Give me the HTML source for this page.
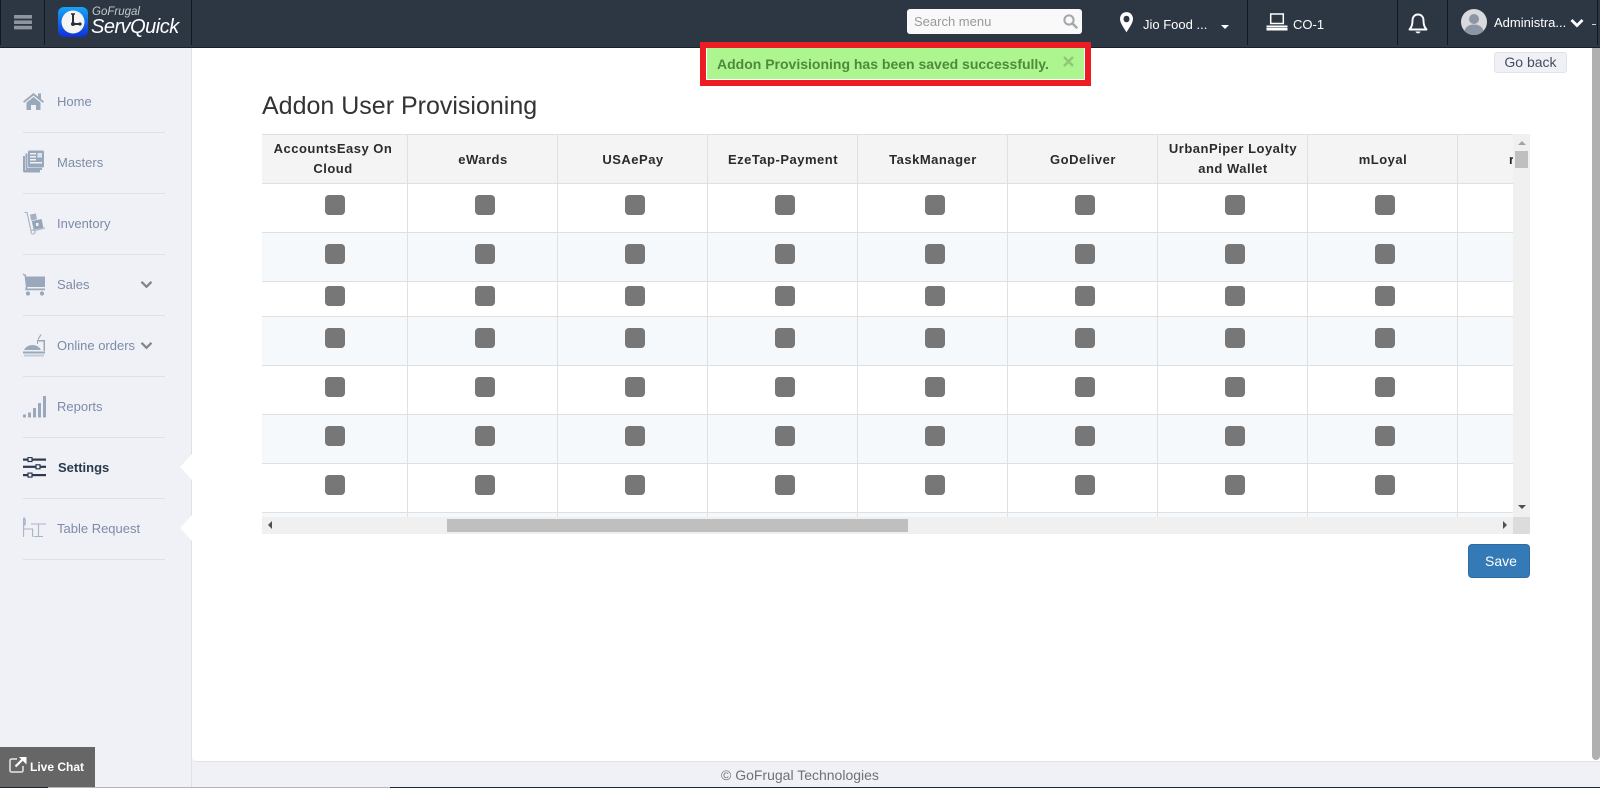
<!DOCTYPE html>
<html><head><meta charset="utf-8"><title>Addon User Provisioning</title>
<style>
html,body{margin:0;padding:0;width:1600px;height:788px;overflow:hidden;background:#eff1f6;font-family:"Liberation Sans",Arial,sans-serif;}
.a{position:absolute;}
#hd{left:0;top:0;width:1600px;height:47px;background:#2d3743;border-bottom:1px solid #1a2027;}
.dv{position:absolute;top:0;width:1px;height:45px;background:#14191f;}
.t{position:absolute;white-space:nowrap;}
.nav{position:absolute;left:57px;font-size:13px;color:#7d8ba8;white-space:nowrap;line-height:16px;}
.sep{position:absolute;left:23px;width:142px;height:1px;background:#dde0e8;}
#wrap{left:262px;top:134px;width:1251px;height:383px;overflow:hidden;}
.hc{position:absolute;top:0;height:49px;width:150px;display:flex;align-items:center;justify-content:center;text-align:center;font-size:13px;font-weight:bold;color:#2b2b2b;letter-spacing:.5px;line-height:20px;}
.cb{position:absolute;width:20px;height:20px;border-radius:4px;background:#777;}
.hl{position:absolute;left:0;width:1251px;height:1px;background:#e0e0e0;}
.vl{position:absolute;top:0;width:1px;height:383px;background:#e0e0e0;}
.st{position:absolute;left:0;width:1251px;background:#f6f9fc;}
</style></head><body>
<div class="a" id="hd"></div>
<div class="dv" style="left:0"></div><div class="dv" style="left:44px"></div><div class="dv" style="left:191px"></div>
<div class="dv" style="left:1247px"></div><div class="dv" style="left:1397px"></div><div class="dv" style="left:1447px"></div><div class="dv" style="left:1597px"></div>
<svg class="a" style="left:14px;top:14px" width="18" height="16"><g fill="#8d959e"><rect width="18" height="3.6" y="1" rx=".6"/><rect width="18" height="3.6" y="6.4" rx=".6"/><rect width="18" height="3.6" y="11.8" rx=".6"/></g></svg>
<svg class="a" style="left:58px;top:7px" width="30" height="30" viewBox="0 0 30 30"><defs><linearGradient id="lg" x1="0" y1="0" x2="0" y2="1"><stop offset="0" stop-color="#14a6f5"/><stop offset="1" stop-color="#1030d8"/></linearGradient></defs><rect width="30" height="30" rx="6" fill="url(#lg)"/><circle cx="15" cy="15" r="11.5" fill="#f4f4f4"/><path d="M15 7v10h7" stroke="#2a2f36" stroke-width="2" fill="none"/><circle cx="15" cy="17" r="2" fill="#2a2f36"/><circle cx="22" cy="17" r="1.6" fill="#2a2f36"/><path d="M13 7h4" stroke="#2a2f36" stroke-width="1.5"/></svg>
<div class="t" style="left:92px;top:5px;font-size:11.5px;font-style:italic;color:#c4c8cd;line-height:14px">GoFrugal</div>
<div class="t" style="left:91px;top:15px;font-size:20px;font-style:italic;color:#fff;line-height:25px;letter-spacing:-.5px">ServQuick</div>

<div class="a" style="left:907px;top:9px;width:175px;height:25px;background:#f9f9f9;border-radius:3px"></div>
<div class="t" style="left:914px;top:14px;font-size:13px;color:#999;line-height:15px">Search menu</div>
<svg class="a" style="left:1063px;top:14px" width="15" height="15" viewBox="0 0 15 15"><circle cx="6" cy="6" r="4.6" fill="none" stroke="#a3a7ad" stroke-width="2"/><path d="M9.5 9.5L13.5 13.5" stroke="#a3a7ad" stroke-width="2.4" stroke-linecap="round"/></svg>
<svg class="a" style="left:1119px;top:11px" width="15" height="23" viewBox="0 0 15 21" preserveAspectRatio="none"><path d="M7.5 1C3.6 1 1 3.8 1 7.3c0 4 4.5 8.8 6.5 12.2C9.500 16.100 14 11.300 14 7.300 14 3.800 11.400 1 7.500 1z" fill="#fff"/><circle cx="7.500" cy="7.300" r="3" fill="#2d3743"/></svg>
<div class="t" style="left:1143px;top:17px;font-size:13px;color:#fff;line-height:15px">Jio Food ...</div>
<div class="a" style="left:1221px;top:25px;width:0;height:0;border-left:4.5px solid transparent;border-right:4.5px solid transparent;border-top:4.5px solid #fff"></div>
<svg class="a" style="left:1266px;top:13px" width="22" height="19" viewBox="0 0 22 19"><rect x="4.700" y="1" width="12.600" height="9.500" fill="none" stroke="#fff" stroke-width="1.500"/><rect x="0.500" y="12.500" width="21" height="2" fill="#fff"/><rect x="0.500" y="15" width="21" height="2.500" fill="#fff"/></svg>
<div class="t" style="left:1293px;top:17px;font-size:13px;color:#fff;line-height:15px">CO-1</div>
<svg class="a" style="left:1408px;top:13px" width="20" height="22" viewBox="0 0 20 22"><path d="M10 1.500c-3.700 0-5.500 2.800-5.500 6 0 4.500-1 6.500-3 9h17c-2-2.500-3-4.500-3-9 0-3.200-1.800-6-5.500-6z" fill="none" stroke="#fff" stroke-width="1.900" stroke-linejoin="round"/><path d="M7.500 18.500a2.600 2.600 0 0 0 5 0z" fill="#fff"/></svg>
<svg class="a" style="left:1461px;top:9px" width="26" height="26" viewBox="0 0 26 26"><circle cx="13" cy="13" r="13" fill="#d9dadd"/><circle cx="13" cy="10" r="5" fill="#8b97a5"/><path d="M3.500 22c1-4.500 5-6.500 9.500-6.500s8.500 2 9.500 6.500a13 13 0 0 1-19 0z" fill="#8b97a5"/></svg>
<div class="t" style="left:1494px;top:15px;font-size:13px;color:#fff;line-height:15px">Administra...</div>
<svg class="a" style="left:1570px;top:18px" width="14" height="10" viewBox="0 0 14 10"><path d="M1.500 2L7 7.500 12.500 2" fill="none" stroke="#fff" stroke-width="2.800"/></svg>
<div class="a" style="left:1592px;top:24px;width:4px;height:1px;background:#cfd3d8"></div>

<!-- sidebar -->
<div class="a" style="left:0;top:48px;width:191px;height:740px;background:#eff1f6;border-right:1px solid #dfe1e6"></div>
<div class="a" style="left:192px;top:48px;width:1408px;height:713px;background:#fff;border-bottom:1px solid #dfe1e6;border-bottom-left-radius:4px;"></div>

<div class="sep" style="top:132px"></div><div class="sep" style="top:193px"></div><div class="sep" style="top:254px"></div><div class="sep" style="top:315px"></div><div class="sep" style="top:376px"></div><div class="sep" style="top:437px"></div><div class="sep" style="top:498px"></div><div class="sep" style="top:559px"></div>

<div class="nav" style="top:94px">Home</div>
<div class="nav" style="top:155px">Masters</div>
<div class="nav" style="top:216px">Inventory</div>
<div class="nav" style="top:277px">Sales</div>
<div class="nav" style="top:338px">Online orders</div>
<div class="nav" style="top:399px">Reports</div>
<div class="nav" style="top:460px;left:58px;font-weight:bold;color:#2c3a4d">Settings</div>
<div class="nav" style="top:521px">Table Request</div>

<svg class="a" style="left:23px;top:92px" width="21" height="18" viewBox="0 0 21 18"><path d="M0 9.500L10.500 1 15 4.600V1.500h3v5.500L21 9.500l-1.200 1.200L10.500 3.500 1.200 10.700z" fill="#9aa8bb"/><path d="M3.500 10.500L10.500 5l7 5.500V18H13v-5H8v5H3.500z" fill="#9aa8bb"/></svg>
<svg class="a" style="left:23px;top:150px" width="21" height="23" viewBox="0 0 21 23"><path d="M0 6h2v14h15v2.500H1.500A1.500 1.500 0 0 1 0 21z" fill="#9aa8bb"/><path d="M2.500 3.500h2V18H19v2H4a1.500 1.500 0 0 1-1.500-1.500z" fill="#9aa8bb"/><rect x="5" y="0.500" width="16" height="17" rx="1.500" fill="#9aa8bb"/><g fill="#eff1f6"><rect x="7" y="3" width="6" height="1.500"/><rect x="7" y="6" width="6" height="1.500"/><rect x="7" y="9" width="6" height="1.500"/><rect x="7" y="12" width="12" height="1.500"/></g><rect x="14.500" y="3" width="4.500" height="4.500" fill="#dfe3ea"/></svg>
<svg class="a" style="left:24px;top:211px" width="22" height="24" viewBox="0 0 22 24"><path d="M0.500 1.500H3L7 20" fill="none" stroke="#a5b1c2" stroke-width="1.100"/><circle cx="9" cy="21" r="2" fill="none" stroke="#a5b1c2" stroke-width="1.100"/><path d="M11 19.500L21 17" stroke="#a5b1c2" stroke-width="1.100"/><rect x="6.500" y="3" width="6" height="6" fill="#a5b1c2" transform="rotate(-12 9 6)"/><rect x="8.500" y="9" width="10" height="9" fill="#97a5b9" transform="rotate(-12 13 13)"/><rect x="12" y="12" width="2.500" height="3" fill="#eff1f6"/></svg>
<svg class="a" style="left:23px;top:273px" width="22" height="24" viewBox="0 0 22 24"><path d="M0 .5l3 1.200v1.800h19V14H4.500l-.5 1.500h18v1.800H2.200L2.800 13 1.500 2.500 0 2z" fill="#9aa8bb"/><circle cx="5" cy="20.500" r="2.100" fill="#9aa8bb"/><circle cx="19" cy="20.500" r="2.100" fill="#9aa8bb"/></svg>
<svg class="a" style="left:23px;top:333px" width="23" height="25" viewBox="0 0 23 25"><path d="M18 1.500l-3 5" stroke="#9aa8bb" stroke-width="1.200"/><path d="M14 7h8v11h-1.500V8.500H15V11h-1z" fill="#9aa8bb"/><path d="M1 17a9 7.500 0 0 1 17 0z" fill="#9aa8bb"/><rect x="0" y="18.500" width="22" height="2" fill="#9aa8bb"/><rect x="1" y="21.500" width="20" height="2" fill="#c2cad6"/></svg>
<svg class="a" style="left:23px;top:395px" width="23" height="23" viewBox="0 0 23 23"><g fill="#9aa8bb"><rect x="0" y="19.500" width="3" height="3" rx=".5"/><rect x="5" y="17.500" width="3" height="5" rx=".5"/><rect x="10" y="13" width="3" height="9.500" rx=".5"/><rect x="15" y="8" width="3" height="14.500" rx=".5"/><rect x="20" y="1" width="3" height="21.500" rx=".5"/></g></svg>
<svg class="a" style="left:23px;top:457px" width="23" height="21" viewBox="0 0 23 21"><g fill="#2c3a50"><rect y="1.500" width="23" height="2.200"/><rect y="8.700" width="23" height="2.200"/><rect y="17" width="23" height="2.200"/></g><g fill="#eff1f6" stroke="#2c3a50" stroke-width="1.200"><rect x="5" y=".5" width="4" height="4"/><rect x="13" y="7.800" width="4" height="4"/><rect x="5" y="16.100" width="4" height="4"/></g></svg>
<svg class="a" style="left:23px;top:517px" width="23" height="22" viewBox="0 0 23 22"><g fill="none" stroke="#a9b4c4" stroke-width="1.100"><path d="M1 1c1.500 0 1.500 4 1 7H1zM.6 1v19M.6 12h9v8"/><path d="M8 7h15M15.500 7v12M11 19.500h9"/></g></svg>

<svg class="a" style="left:140px;top:280px" width="13" height="9" viewBox="0 0 13 9"><path d="M1.500 1.800L6.500 6.800 11.500 1.800" fill="none" stroke="#7f8690" stroke-width="2.300"/></svg>
<svg class="a" style="left:140px;top:341px" width="13" height="9" viewBox="0 0 13 9"><path d="M1.500 1.800L6.500 6.800 11.500 1.800" fill="none" stroke="#7f8690" stroke-width="2.300"/></svg>
<svg class="a" style="left:179px;top:454px" width="13" height="26" viewBox="0 0 13 26"><path d="M13 0L1 13l12 13z" fill="#fff"/></svg>
<svg class="a" style="left:179px;top:515px" width="13" height="26" viewBox="0 0 13 26"><path d="M13 0L1 13l12 13z" fill="#fff"/></svg>

<!-- alert -->
<div class="a" style="left:700px;top:42px;width:379px;height:32px;border:6px solid #ed1c24;background:#fff"></div>
<div class="a" style="left:707px;top:48px;width:377px;height:31px;background:#adf58f"></div>
<div class="t" style="left:717px;top:56px;font-size:14px;font-weight:bold;color:#4f8a3c;line-height:16px">Addon Provisioning has been saved successfully.</div>
<svg class="a" style="left:1063px;top:56px" width="11" height="11" viewBox="0 0 11 11"><path d="M1 1l9 9M10 1l-9 9" stroke="#8dc97a" stroke-width="2.400"/></svg>

<div class="a" style="left:1494px;top:52px;width:71px;height:19px;background:#f0f1f6;border:1px solid #e1e3e9;border-radius:3px;font-size:14px;color:#444f5e;text-align:center;line-height:19px">Go back</div>

<div class="t" style="left:262px;top:92px;font-size:25px;color:#333;line-height:28px">Addon User Provisioning</div>

<!-- table -->
<div class="a" id="wrap">
<div class="a" style="left:0;top:0;width:1251px;height:49px;background:#f4f4f4"></div>
<div class="st" style="top:98px;height:49px"></div>
<div class="st" style="top:182px;height:49px"></div>
<div class="st" style="top:280px;height:49px"></div>
<div class="st" style="top:378px;height:5px"></div>
<div class="hl" style="top:0"></div><div class="hl" style="top:49px"></div><div class="hl" style="top:98px"></div><div class="hl" style="top:147px"></div><div class="hl" style="top:182px"></div><div class="hl" style="top:231px"></div><div class="hl" style="top:280px"></div><div class="hl" style="top:329px"></div><div class="hl" style="top:378px"></div>
<div class="vl" style="left:145px"></div><div class="vl" style="left:295px"></div><div class="vl" style="left:445px"></div><div class="vl" style="left:595px"></div><div class="vl" style="left:745px"></div><div class="vl" style="left:895px"></div><div class="vl" style="left:1045px"></div><div class="vl" style="left:1195px"></div>
<div class="hc" style="left:-4px">AccountsEasy On<br>Cloud</div>
<div class="hc" style="left:146px;top:1px">eWards</div>
<div class="hc" style="left:296px;top:1px">USAePay</div>
<div class="hc" style="left:446px;top:1px">EzeTap-Payment</div>
<div class="hc" style="left:596px;top:1px">TaskManager</div>
<div class="hc" style="left:746px;top:1px">GoDeliver</div>
<div class="hc" style="left:896px">UrbanPiper Loyalty<br>and Wallet</div>
<div class="hc" style="left:1046px;top:1px">mLoyal</div>
<div class="t" style="left:1247px;top:17px;font-size:13px;font-weight:bold;color:#2b2b2b;line-height:18px">r</div>
<div class="cb" style="left:63px;top:61px"></div><div class="cb" style="left:213px;top:61px"></div><div class="cb" style="left:363px;top:61px"></div><div class="cb" style="left:513px;top:61px"></div><div class="cb" style="left:663px;top:61px"></div><div class="cb" style="left:813px;top:61px"></div><div class="cb" style="left:963px;top:61px"></div><div class="cb" style="left:1113px;top:61px"></div>
<div class="cb" style="left:63px;top:110px"></div><div class="cb" style="left:213px;top:110px"></div><div class="cb" style="left:363px;top:110px"></div><div class="cb" style="left:513px;top:110px"></div><div class="cb" style="left:663px;top:110px"></div><div class="cb" style="left:813px;top:110px"></div><div class="cb" style="left:963px;top:110px"></div><div class="cb" style="left:1113px;top:110px"></div>
<div class="cb" style="left:63px;top:152px"></div><div class="cb" style="left:213px;top:152px"></div><div class="cb" style="left:363px;top:152px"></div><div class="cb" style="left:513px;top:152px"></div><div class="cb" style="left:663px;top:152px"></div><div class="cb" style="left:813px;top:152px"></div><div class="cb" style="left:963px;top:152px"></div><div class="cb" style="left:1113px;top:152px"></div>
<div class="cb" style="left:63px;top:194px"></div><div class="cb" style="left:213px;top:194px"></div><div class="cb" style="left:363px;top:194px"></div><div class="cb" style="left:513px;top:194px"></div><div class="cb" style="left:663px;top:194px"></div><div class="cb" style="left:813px;top:194px"></div><div class="cb" style="left:963px;top:194px"></div><div class="cb" style="left:1113px;top:194px"></div>
<div class="cb" style="left:63px;top:243px"></div><div class="cb" style="left:213px;top:243px"></div><div class="cb" style="left:363px;top:243px"></div><div class="cb" style="left:513px;top:243px"></div><div class="cb" style="left:663px;top:243px"></div><div class="cb" style="left:813px;top:243px"></div><div class="cb" style="left:963px;top:243px"></div><div class="cb" style="left:1113px;top:243px"></div>
<div class="cb" style="left:63px;top:292px"></div><div class="cb" style="left:213px;top:292px"></div><div class="cb" style="left:363px;top:292px"></div><div class="cb" style="left:513px;top:292px"></div><div class="cb" style="left:663px;top:292px"></div><div class="cb" style="left:813px;top:292px"></div><div class="cb" style="left:963px;top:292px"></div><div class="cb" style="left:1113px;top:292px"></div>
<div class="cb" style="left:63px;top:341px"></div><div class="cb" style="left:213px;top:341px"></div><div class="cb" style="left:363px;top:341px"></div><div class="cb" style="left:513px;top:341px"></div><div class="cb" style="left:663px;top:341px"></div><div class="cb" style="left:813px;top:341px"></div><div class="cb" style="left:963px;top:341px"></div><div class="cb" style="left:1113px;top:341px"></div>
</div>

<!-- table scrollbars -->
<div class="a" style="left:1513px;top:134px;width:17px;height:383px;background:#f0f0f0"></div>
<div class="a" style="left:1515px;top:151px;width:13px;height:17px;background:#bfbfbf"></div>
<div class="a" style="left:1518px;top:141px;width:0;height:0;border-left:4px solid transparent;border-right:4px solid transparent;border-bottom:4px solid #a3a3a3"></div>
<div class="a" style="left:1518px;top:505px;width:0;height:0;border-left:4px solid transparent;border-right:4px solid transparent;border-top:4px solid #505050"></div>
<div class="a" style="left:262px;top:517px;width:1251px;height:17px;background:#f0f0f0"></div>
<div class="a" style="left:1513px;top:517px;width:17px;height:17px;background:#dcdcdc"></div>
<div class="a" style="left:447px;top:519px;width:461px;height:13px;background:#bfbfbf"></div>
<div class="a" style="left:268px;top:521px;width:0;height:0;border-top:4px solid transparent;border-bottom:4px solid transparent;border-right:4px solid #505050"></div>
<div class="a" style="left:1503px;top:521px;width:0;height:0;border-top:4px solid transparent;border-bottom:4px solid transparent;border-left:4px solid #505050"></div>

<div class="a" style="left:1468px;top:544px;width:60px;height:32px;background:#337ab7;border:1px solid #2e6da4;border-radius:4px;color:#fff;font-size:14px;text-align:center;line-height:32px;text-indent:4px">Save</div>

<!-- page scrollbar -->
<div class="a" style="left:1592px;top:48px;width:8px;height:712px;background:#b0b0b0;border-radius:0 0 4px 4px"></div>

<!-- footer -->
<div class="t" style="left:721px;top:767px;font-size:14px;color:#6d7178;line-height:16px">© GoFrugal Technologies</div>
<div class="a" style="left:0;top:787px;width:1600px;height:1px;background:#1e2a33"></div>
<div class="a" style="left:48px;top:787px;width:342px;height:1px;background:#b5b5b5"></div>
<div class="a" style="left:0;top:747px;width:95px;height:40px;background:#666"></div>
<svg class="a" style="left:9px;top:756px" width="18" height="17" viewBox="0 0 18 17"><path d="M8 3H2.500A1.500 1.500 0 0 0 1 4.500v10A1.500 1.500 0 0 0 2.500 16h10a1.500 1.500 0 0 0 1.500-1.500V10" fill="none" stroke="#e8e8e8" stroke-width="1.500"/><path d="M6.500 10.500L14 3" stroke="#fff" stroke-width="2.200"/><path d="M10 1h7.500v7.500z" fill="#fff"/></svg>
<div class="t" style="left:30px;top:759px;font-size:12px;font-weight:bold;color:#fff;line-height:16px">Live Chat</div>
</body></html>
